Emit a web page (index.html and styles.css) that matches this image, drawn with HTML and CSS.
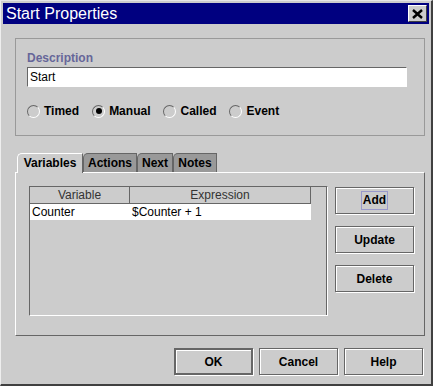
FILE: index.html
```html
<!DOCTYPE html>
<html lang="en">
<head>
    <meta charset="UTF-8">
    <title>Start Properties</title>
    <link rel="stylesheet" href="styles.css">
</head>
<body>
    <div class="window">
        <div class="titlebar">
            <span class="title">Start Properties</span>
            <span class="close-btn">
                <svg width="11" height="10" viewBox="0 0 11 10">
                    <path d="M1 1 L10 9 M10 1 L1 9" stroke="#000" stroke-width="2.4" fill="none"/>
                </svg>
            </span>
        </div>
        <div class="content">
            <div class="group">
                <div class="label">Description</div>
                <div class="textfield">Start</div>
                <div class="radios">
                    <span class="radio"><span class="circle"></span>Timed</span>
                    <span class="radio"><span class="circle checked"></span>Manual</span>
                    <span class="radio"><span class="circle"></span>Called</span>
                    <span class="radio"><span class="circle"></span>Event</span>
                </div>
            </div>

            <div class="tabs">
                <span class="tab selected tab-variables">Variables</span>
                <span class="tab tab-actions">Actions</span>
                <span class="tab tab-next">Next</span>
                <span class="tab tab-notes">Notes</span>
            </div>
            <div class="panel">
                <div class="table">
                    <div class="table-head">
                        <span class="th col-var">Variable</span>
                        <span class="th col-expr">Expression</span>
                    </div>
                    <div class="table-row">
                        <span class="td col-var">Counter</span>
                        <span class="td col-expr">$Counter + 1</span>
                    </div>
                </div>
                <div class="side-buttons">
                    <button class="btn"><span class="focus">Add</span></button>
                    <button class="btn">Update</button>
                    <button class="btn">Delete</button>
                </div>
            </div>

            <div class="footer">
                <button class="btn default">OK</button>
                <button class="btn">Cancel</button>
                <button class="btn">Help</button>
            </div>
        </div>
    </div>
</body>
</html>
```

FILE: styles.css
```css
body {
    margin: 0;
    padding: 0;
    background-color: #cccccc;
    font-family: 'Liberation Sans', Arial, sans-serif;
    font-size: 12px;
    color: #000;
}
.window {
    width: 433px;
    height: 386px;
    box-sizing: border-box;
    background-color: #cccccc;
    border-top: 1px solid #e6e6e6;
    border-left: 1px solid #eeeeee;
    border-right: 2px solid #404040;
    border-bottom: 2px solid #404040;
    padding: 2px 2px 0 2px;
}
.titlebar {
    height: 21px;
    background-color: #000080;
    display: flex;
    align-items: center;
    justify-content: space-between;
    padding: 0 2px 0 3px;
}
.title {
    color: #fff;
    font-size: 16px;
    line-height: 21px;
}
.close-btn {
    width: 17px;
    height: 15px;
    background-color: #cccccc;
    border-top: 1px solid #fff;
    border-left: 1px solid #fff;
    border-right: 1px solid #404040;
    border-bottom: 1px solid #404040;
    display: flex;
    align-items: center;
    justify-content: center;
}
.content {
    padding-left: 12px;
}
.group {
    margin-top: 14px;
    width: 410px;
    height: 98px;
    box-sizing: border-box;
    border: 1px solid #999999;
    padding: 12px 0 0 11px;
}
.label {
    color: #666699;
    font-weight: bold;
    line-height: 14px;
}
.textfield {
    margin-top: 2px;
    width: 380px;
    height: 20px;
    box-sizing: border-box;
    background-color: #fff;
    border-top: 1px solid #666666;
    border-left: 1px solid #666666;
    border-right: 1px solid #fff;
    border-bottom: 1px solid #fff;
    padding-left: 2px;
    line-height: 18px;
}
.radios {
    display: flex;
    gap: 13px;
    margin-top: 17px;
}
.radio {
    display: flex;
    align-items: center;
    gap: 4px;
    font-weight: bold;
    line-height: 14px;
}
.circle {
    flex: none;
    width: 11px;
    height: 11px;
    border-radius: 50%;
    border: 1px solid;
    border-color: #666666 #ffffff #ffffff #666666;
    background-color: #cccccc;
    display: flex;
    align-items: center;
    justify-content: center;
}
.circle.checked::after {
    content: '';
    width: 6px;
    height: 6px;
    border-radius: 50%;
    background-color: #000;
}
.tabs {
    margin-top: 17px;
    margin-left: 2px;
    display: flex;
    height: 19px;
}
.tab {
    box-sizing: border-box;
    height: 19px;
    font-weight: bold;
    text-align: center;
    line-height: 18px;
    background-color: #999999;
    border-top: 1px solid #666666;
    border-left: 1px solid #666666;
    border-right: 1px solid #666666;
    border-top-left-radius: 5px;
}
.tab.selected {
    background-color: #cccccc;
    border-top-color: #fff;
    border-left-color: #fff;
    border-right-color: #666666;
    height: 20px;
    position: relative;
    z-index: 1;
}
.tab-variables { width: 66px; }
.tab-actions { width: 54px; }
.tab-next { width: 36px; }
.tab-notes { width: 44px; }
.panel {
    width: 410px;
    height: 164px;
    box-sizing: border-box;
    border-top: 1px solid #fff;
    border-left: 1px solid #fff;
    border-right: 1px solid #666666;
    border-bottom: 1px solid #666666;
    display: flex;
    padding: 13px 0 0 13px;
    gap: 7px;
}
.table {
    width: 299px;
    height: 130px;
    box-sizing: border-box;
    border-top: 1px solid #666666;
    border-left: 1px solid #666666;
    border-right: 1px solid #fff;
    border-bottom: 1px solid #fff;
    box-shadow: inset -1px 0 0 #666666;
}
.table-head,
.table-row {
    display: flex;
    width: 281px;
}
.th {
    box-sizing: border-box;
    height: 17px;
    line-height: 16px;
    text-align: center;
    color: #333;
    border-bottom: 1px solid #666666;
    border-right: 1px solid #666666;
}
.table-row {
    background-color: #fff;
    height: 16px;
    line-height: 16px;
}
.td {
    padding-left: 2px;
    box-sizing: border-box;
}
.col-var { width: 100px; }
.col-expr { width: 181px; }
.side-buttons {
    display: flex;
    flex-direction: column;
    gap: 12px;
    padding-top: 1px;
}
.btn {
    width: 79px;
    height: 27px;
    box-sizing: border-box;
    background-color: #cccccc;
    border: 1px solid #666666;
    box-shadow: inset 1px 1px 0 #fff, 1px 1px 0 #fff;
    font-family: 'Liberation Sans', Arial, sans-serif;
    font-size: 12px;
    font-weight: bold;
    color: #000;
    padding: 0;
    display: flex;
    align-items: center;
    justify-content: center;
}
.btn .focus {
    border: 1px solid #9999cc;
    padding: 2px 1px;
    line-height: 13px;
}
.btn.default {
    border: 2px solid #666666;
}
.footer {
    display: flex;
    justify-content: flex-end;
    gap: 6px;
    width: 408px;
    margin-top: 12px;
}
```
